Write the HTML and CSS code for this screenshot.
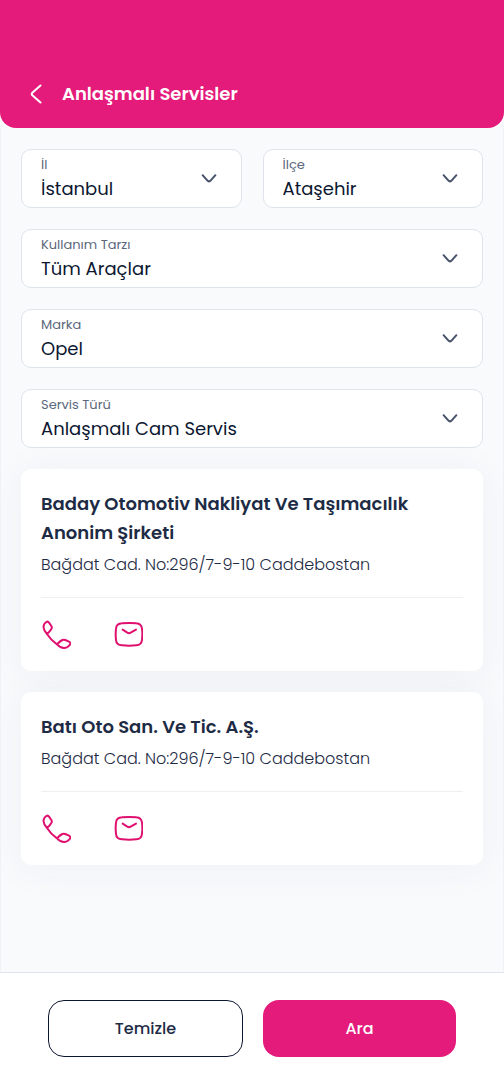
FILE: index.html
```html
<!DOCTYPE html>
<html lang="tr">
<head>
    <meta charset="UTF-8">
    <meta name="viewport" content="width=device-width, initial-scale=1.0">
    <title>Anlaşmalı Servisler</title>
    <link rel="stylesheet" href="styles.css">
</head>
<body>
    <header class="header">
        <button class="back" type="button" aria-label="Geri">
            <svg width="12" height="20" viewBox="0 0 12 20"><path d="M10.5 1.5L2.3 8.8Q1.2 10 2.3 11.2L10.5 18.5"/></svg>
        </button>
        <h1>Anlaşmalı Servisler</h1>
    </header>

    <main class="content">
        <form class="filters" id="filters">
            <div class="field half">
                <label for="city">İl</label>
                <select id="city"><option>İstanbul</option></select>
                <svg class="chevron" width="24" height="24" viewBox="0 0 24 24"><path d="M5.6 8.2L10.7 13.8Q12 15 13.3 13.8L18.4 8.2"/></svg>
            </div>
            <div class="field half">
                <label for="district">İlçe</label>
                <select id="district"><option>Ataşehir</option></select>
                <svg class="chevron" width="24" height="24" viewBox="0 0 24 24"><path d="M5.6 8.2L10.7 13.8Q12 15 13.3 13.8L18.4 8.2"/></svg>
            </div>
            <div class="field">
                <label for="usage">Kullanım Tarzı</label>
                <select id="usage"><option>Tüm Araçlar</option></select>
                <svg class="chevron" width="24" height="24" viewBox="0 0 24 24"><path d="M5.6 8.2L10.7 13.8Q12 15 13.3 13.8L18.4 8.2"/></svg>
            </div>
            <div class="field">
                <label for="brand">Marka</label>
                <select id="brand"><option>Opel</option></select>
                <svg class="chevron" width="24" height="24" viewBox="0 0 24 24"><path d="M5.6 8.2L10.7 13.8Q12 15 13.3 13.8L18.4 8.2"/></svg>
            </div>
            <div class="field">
                <label for="service">Servis Türü</label>
                <select id="service"><option>Anlaşmalı Cam Servis</option></select>
                <svg class="chevron" width="24" height="24" viewBox="0 0 24 24"><path d="M5.6 8.2L10.7 13.8Q12 15 13.3 13.8L18.4 8.2"/></svg>
            </div>
        </form>

        <article class="card">
            <h2>Baday Otomotiv Nakliyat Ve Taşımacılık Anonim Şirketi</h2>
            <p>Bağdat Cad. No:296/7-9-10 Caddebostan</p>
            <div class="actions">
                <a href="tel:" aria-label="Ara">
                    <svg viewBox="0 0 90 90"><path d="M18 42C5 28 4 14 16 6Q21 3 24 8L31 18Q34 23 31 27Q27 34 18 42Q30 61 48 73Q56 64 64 60Q68 58 73 60L84 65Q91 69 86 75C77 87 62 88 48 73"/></svg>
                </a>
                <a href="mailto:" aria-label="E-posta">
                    <svg viewBox="0 0 90 90"><path d="M27 10Q49 8 70 10Q85 11 87 26Q89 43 87 60Q85 75 70 76Q49 78 27 76Q10 75 9 60Q7 43 9 26Q10 11 27 10ZM29 29L43 38Q48 41 53 38L69 29"/></svg>
                </a>
            </div>
        </article>

        <article class="card">
            <h2>Batı Oto San. Ve Tic. A.Ş.</h2>
            <p>Bağdat Cad. No:296/7-9-10 Caddebostan</p>
            <div class="actions">
                <a href="tel:" aria-label="Ara">
                    <svg viewBox="0 0 90 90"><path d="M18 42C5 28 4 14 16 6Q21 3 24 8L31 18Q34 23 31 27Q27 34 18 42Q30 61 48 73Q56 64 64 60Q68 58 73 60L84 65Q91 69 86 75C77 87 62 88 48 73"/></svg>
                </a>
                <a href="mailto:" aria-label="E-posta">
                    <svg viewBox="0 0 90 90"><path d="M27 10Q49 8 70 10Q85 11 87 26Q89 43 87 60Q85 75 70 76Q49 78 27 76Q10 75 9 60Q7 43 9 26Q10 11 27 10ZM29 29L43 38Q48 41 53 38L69 29"/></svg>
                </a>
            </div>
        </article>
    </main>

    <footer class="footer">
        <button class="btn btn-outline" type="reset" form="filters">Temizle</button>
        <button class="btn btn-primary" type="submit" form="filters">Ara</button>
    </footer>
</body>
</html>
```

FILE: styles.css
```css
* {
    box-sizing: border-box;
}

body {
    margin: 0;
    min-height: 100vh;
    display: flex;
    flex-direction: column;
    font-family: Poppins, Inter, sans-serif;
    color: #1e2b45;
    background-color: #f9fafc;
}

svg {
    display: block;
    fill: none;
    stroke-linecap: round;
    stroke-linejoin: round;
}

.header {
    display: flex;
    align-items: center;
    gap: 20px;
    padding: 80px 30px 20px;
    color: #fff;
    background-color: #e41b7b;
    border-radius: 0 0 16px 16px;
}

.header h1 {
    margin: 0;
    font-size: 18px;
    line-height: 28px;
    font-weight: 600;
}

.back {
    padding: 0;
    border: none;
    background: none;
    cursor: pointer;
}

.back svg {
    stroke: #fff;
    stroke-width: 2;
}

.content {
    flex: 1;
    display: flex;
    flex-direction: column;
    gap: 21px;
    padding: 21px 20px;
    border: 1px solid #f0f2f7;
    border-width: 0 1px;
}

.filters {
    display: grid;
    grid-template-columns: 1fr 1fr;
    gap: 21px;
}

.field {
    grid-column: span 2;
    display: grid;
    grid-template-columns: 1fr auto;
    align-items: center;
    height: 59px;
    background-color: #fff;
    border: 1px solid #dfe3ec;
    border-radius: 10px;
}

.half {
    grid-column: span 1;
}

.field label {
    grid-area: 1 / 1;
    align-self: start;
    padding: 6px 0 0 19px;
    font-size: 13px;
    line-height: 18px;
    color: #5b677c;
    pointer-events: none;
    z-index: 1;
}

.field select {
    grid-area: 1 / 1 / 2 / 3;
    width: 100%;
    height: 100%;
    padding: 20px 52px 0 19px;
    font-family: inherit;
    font-size: 18px;
    color: #0b1730;
    background: none;
    border: none;
    border-radius: 10px;
    appearance: none;
}

.chevron {
    grid-area: 1 / 2;
    margin-right: 20px;
    stroke: #46536a;
    stroke-width: 2;
    pointer-events: none;
}

.card {
    padding: 20px 20px 21px;
    background-color: #fff;
    border-radius: 10px;
    box-shadow: 0 4px 40px rgba(30, 50, 100, 0.05);
}

.card h2 {
    margin: 0;
    font-size: 18px;
    line-height: 29px;
    font-weight: 600;
}

.card p {
    margin: 6px 0 20px;
    font-size: 16px;
    line-height: 24px;
    font-weight: 300;
}

.actions {
    display: flex;
    gap: 42px;
    padding: 22px 0 0;
    border-top: 1px solid #eeeff2;
}

.actions svg {
    width: 30px;
    height: 30px;
    stroke: #e0106f;
    stroke-width: 6;
}

.footer {
    display: flex;
    gap: 20px;
    padding: 27px 48px 31px;
    background-color: #fff;
    border-top: 1px solid #dfe3ec;
}

.btn {
    flex: 1;
    height: 57px;
    font-family: inherit;
    font-size: 16px;
    font-weight: 500;
    border-radius: 16px;
    cursor: pointer;
}

.btn-outline {
    color: #1e2b45;
    background-color: #fff;
    border: 1px solid #0b1730;
}

.btn-primary {
    color: #fff;
    background-color: #e41b7b;
    border: none;
}
```
